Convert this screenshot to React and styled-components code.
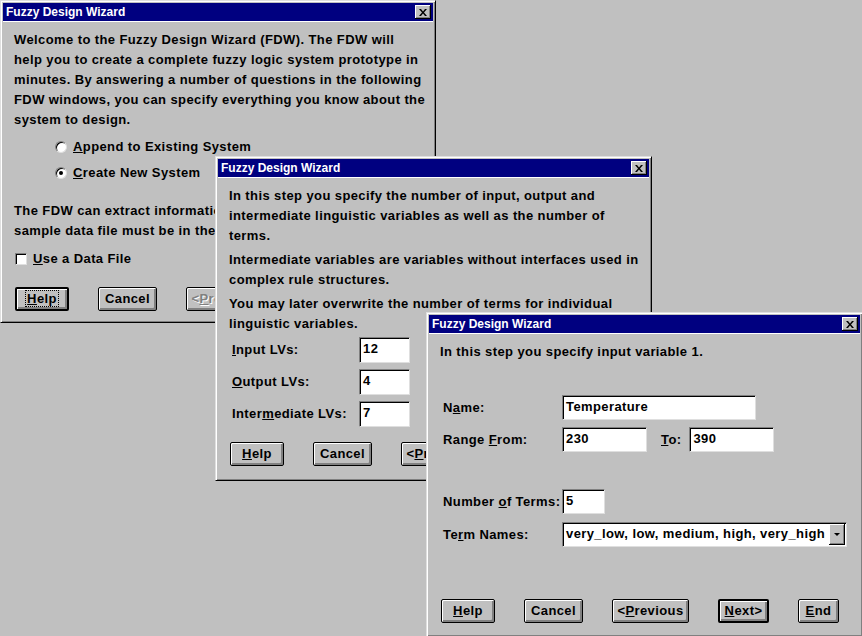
import styled, { createGlobalStyle } from "styled-components";

const GlobalStyle = createGlobalStyle`
  body {
    margin: 0;
    background: #c0c0c0;
    font-family: "Liberation Sans", Arial, sans-serif;
  }
`;

const Desktop = styled.div`
  position: relative;
  width: 862px;
  height: 636px;
  overflow: hidden;
  background: #c0c0c0;
`;

const Window = styled.div`
  position: absolute;
  left: ${(p) => p.$x}px;
  top: ${(p) => p.$y}px;
  width: ${(p) => p.$w}px;
  height: ${(p) => p.$h}px;
  box-sizing: border-box;
  background: #c0c0c0;
  border: 1px solid;
  border-color: #dfdfdf #000 #000 #dfdfdf;
  box-shadow: inset 1px 1px #fff, inset -1px -1px #808080;
  padding: 2px;
  display: flex;
  flex-direction: column;
`;

const TitleBar = styled.div`
  height: 18px;
  background: #000080;
  color: #fff;
  display: flex;
  align-items: center;
  justify-content: space-between;
  padding: 0 2px 0 3px;
  font: 700 12px "Liberation Sans", Arial, sans-serif;
  box-shadow: 0 1px #fff;
`;

const CloseBtn = styled.div`
  width: 16px;
  height: 14px;
  box-sizing: border-box;
  background: #c0c0c0;
  box-shadow: inset -1px -1px #000, inset 1px 1px #fff, inset -2px -2px #808080;
  display: flex;
  align-items: center;
  justify-content: center;
`;

const Body = styled.div`
  padding: 9px 10px 0 11px;
  display: flex;
  flex-direction: column;
  font: 700 13px/20px "Liberation Sans", Arial, sans-serif;
  letter-spacing: 0.4px;
  color: #000;
`;

const Para = styled.div`
  white-space: nowrap;
  margin-top: ${(p) => p.$mt || 0}px;
`;

const OptionRow = styled.div`
  display: flex;
  align-items: center;
  height: 26px;
  margin-left: ${(p) => p.$ml || 0}px;
  margin-top: ${(p) => p.$mt || 0}px;
  gap: 6px;
`;

const Radio = styled.span`
  width: 12px;
  height: 12px;
  box-sizing: border-box;
  border-radius: 50%;
  background: #fff;
  border: 1px solid;
  border-color: #808080 #dfdfdf #dfdfdf #808080;
  box-shadow: inset 1px 1px #000;
  display: flex;
  align-items: center;
  justify-content: center;
  &::after {
    content: "";
    width: 4px;
    height: 4px;
    border-radius: 50%;
    background: ${(p) => (p.$on ? "#000" : "transparent")};
  }
`;

const Check = styled.span`
  width: 12px;
  height: 12px;
  box-sizing: border-box;
  background: #fff;
  border: 1px solid;
  border-color: #808080 #dfdfdf #dfdfdf #808080;
  box-shadow: inset 1px 1px #000;
`;

const ButtonRow = styled.div`
  display: flex;
  gap: 29px;
  margin-top: ${(p) => p.$mt || 0}px;
  padding-left: 1px;
`;

const Btn = styled.div`
  flex: none;
  width: ${(p) => p.$w}px;
  height: 24px;
  box-sizing: border-box;
  border: ${(p) => (p.$def ? 2 : 1)}px solid #000;
  border-radius: 2px;
  background: #c0c0c0;
  box-shadow: inset 1px 1px #fff, inset -2px -2px #808080;
  display: flex;
  align-items: center;
  justify-content: center;
  font: 700 13px "Liberation Sans", Arial, sans-serif;
  letter-spacing: 0.4px;
  color: ${(p) => (p.$off ? "#808080" : "#000")};
  text-shadow: ${(p) => (p.$off ? "1px 1px #fff" : "none")};
  padding-bottom: 1px;
`;

const Focus = styled.span`
  outline: 1px dotted #000;
  outline-offset: 0;
  padding: 0 1px;
`;

const FieldRow = styled.div`
  display: flex;
  align-items: center;
  margin-top: ${(p) => p.$mt || 0}px;
  padding-left: 3px;
`;

const Label = styled.div`
  flex: none;
  width: ${(p) => p.$w}px;
  white-space: nowrap;
`;

const Field = styled.div`
  flex: none;
  width: ${(p) => p.$w}px;
  height: ${(p) => p.$h || 25}px;
  box-sizing: border-box;
  background: #fff;
  border: 1px solid;
  border-color: #808080 #dfdfdf #dfdfdf #808080;
  box-shadow: inset 1px 1px #000;
  padding: 1px 3px 0;
  line-height: 20px;
  white-space: nowrap;
  overflow: hidden;
  position: relative;
`;

const ToLabel = styled.div`
  margin: 0 8px 0 14px;
`;

const DropBtn = styled.div`
  position: absolute;
  right: 1px;
  top: 1px;
  width: 16px;
  height: 21px;
  box-sizing: border-box;
  background: #c0c0c0;
  box-shadow: inset -1px -1px #000, inset 1px 1px #fff, inset -2px -2px #808080;
  display: flex;
  align-items: center;
  justify-content: center;
  &::after {
    content: "";
    border-left: 3px solid transparent;
    border-right: 3px solid transparent;
    border-top: 3px solid #000;
  }
`;

function CloseX() {
  return (
    <CloseBtn>
      <svg width="8" height="7" viewBox="0 0 8 7">
        <path d="M0 0h2l2 2.5L6 0h2L5 3.5 8 7H6L4 4.5 2 7H0l3-3.5z" fill="#000" />
      </svg>
    </CloseBtn>
  );
}

function Title() {
  return (
    <TitleBar>
      <span>Fuzzy Design Wizard</span>
      <CloseX />
    </TitleBar>
  );
}

function WelcomeWindow() {
  return (
    <Window $x={0} $y={0} $w={436} $h={323}>
      <Title />
      <Body>
        <Para>
          Welcome to the Fuzzy Design Wizard (FDW). The FDW will
          <br />
          help you to create a complete fuzzy logic system prototype in
          <br />
          minutes. By answering a number of questions in the following
          <br />
          FDW windows, you can specify everything you know about the
          <br />
          system to design.
        </Para>
        <OptionRow $ml={41} $mt={4}>
          <Radio />
          <span>
            <u>A</u>ppend to Existing System
          </span>
        </OptionRow>
        <OptionRow $ml={41}>
          <Radio $on />
          <span>
            <u>C</u>reate New System
          </span>
        </OptionRow>
        <Para $mt={15}>
          The FDW can extract information
          <br />
          sample data file must be in the
        </Para>
        <OptionRow $ml={1} $mt={5}>
          <Check />
          <span>
            <u>U</u>se a Data File
          </span>
        </OptionRow>
        <ButtonRow $mt={15}>
          <Btn $w={54} $def>
            <Focus>
              <u>H</u>elp
            </Focus>
          </Btn>
          <Btn $w={59}>Cancel</Btn>
          <Btn $w={77} $off>
            &lt;<u>P</u>revious
          </Btn>
        </ButtonRow>
      </Body>
    </Window>
  );
}

function CountWindow() {
  return (
    <Window $x={215} $y={156} $w={437} $h={325}>
      <Title />
      <Body>
        <Para>
          In this step you specify the number of input, output and
          <br />
          intermediate linguistic variables as well as the number of
          <br />
          terms.
        </Para>
        <Para $mt={4}>
          Intermediate variables are variables without interfaces used in
          <br />
          complex rule structures.
        </Para>
        <Para $mt={4}>
          You may later overwrite the number of terms for individual
          <br />
          linguistic variables.
        </Para>
        <FieldRow $mt={3}>
          <Label $w={127}>
            <u>I</u>nput LVs:
          </Label>
          <Field $w={51} $h={26}>
            12
          </Field>
        </FieldRow>
        <FieldRow $mt={6}>
          <Label $w={127}>
            <u>O</u>utput LVs:
          </Label>
          <Field $w={51} $h={26}>
            4
          </Field>
        </FieldRow>
        <FieldRow $mt={6}>
          <Label $w={127}>
            Inter<u>m</u>ediate LVs:
          </Label>
          <Field $w={51} $h={26}>
            7
          </Field>
        </FieldRow>
        <ButtonRow $mt={15}>
          <Btn $w={54}>
            <u>H</u>elp
          </Btn>
          <Btn $w={59}>Cancel</Btn>
          <Btn $w={77}>
            &lt;<u>P</u>revious
          </Btn>
        </ButtonRow>
      </Body>
    </Window>
  );
}

function VariableWindow() {
  return (
    <Window $x={426} $y={312} $w={437} $h={325}>
      <Title />
      <Body>
        <Para>In this step you specify input variable 1.</Para>
        <FieldRow $mt={33}>
          <Label $w={119}>
            N<u>a</u>me:
          </Label>
          <Field $w={194}>Temperature</Field>
        </FieldRow>
        <FieldRow $mt={7}>
          <Label $w={119}>
            Range <u>F</u>rom:
          </Label>
          <Field $w={85}>230</Field>
          <ToLabel>
            <u>T</u>o:
          </ToLabel>
          <Field $w={85}>390</Field>
        </FieldRow>
        <FieldRow $mt={37}>
          <Label $w={119}>
            Number <u>o</u>f Terms:
          </Label>
          <Field $w={43}>5</Field>
        </FieldRow>
        <FieldRow $mt={8}>
          <Label $w={119}>
            Te<u>r</u>m Names:
          </Label>
          <Field $w={285}>
            very_low, low, medium, high, very_high
            <DropBtn />
          </Field>
        </FieldRow>
        <ButtonRow $mt={52}>
          <Btn $w={54}>
            <u>H</u>elp
          </Btn>
          <Btn $w={59}>Cancel</Btn>
          <Btn $w={77}>
            &lt;<u>P</u>revious
          </Btn>
          <Btn $w={51} $def>
            <u>N</u>ext&gt;
          </Btn>
          <Btn $w={41}>
            <u>E</u>nd
          </Btn>
        </ButtonRow>
      </Body>
    </Window>
  );
}

export default function App() {
  return (
    <Desktop>
      <GlobalStyle />
      <WelcomeWindow />
      <CountWindow />
      <VariableWindow />
    </Desktop>
  );
}
